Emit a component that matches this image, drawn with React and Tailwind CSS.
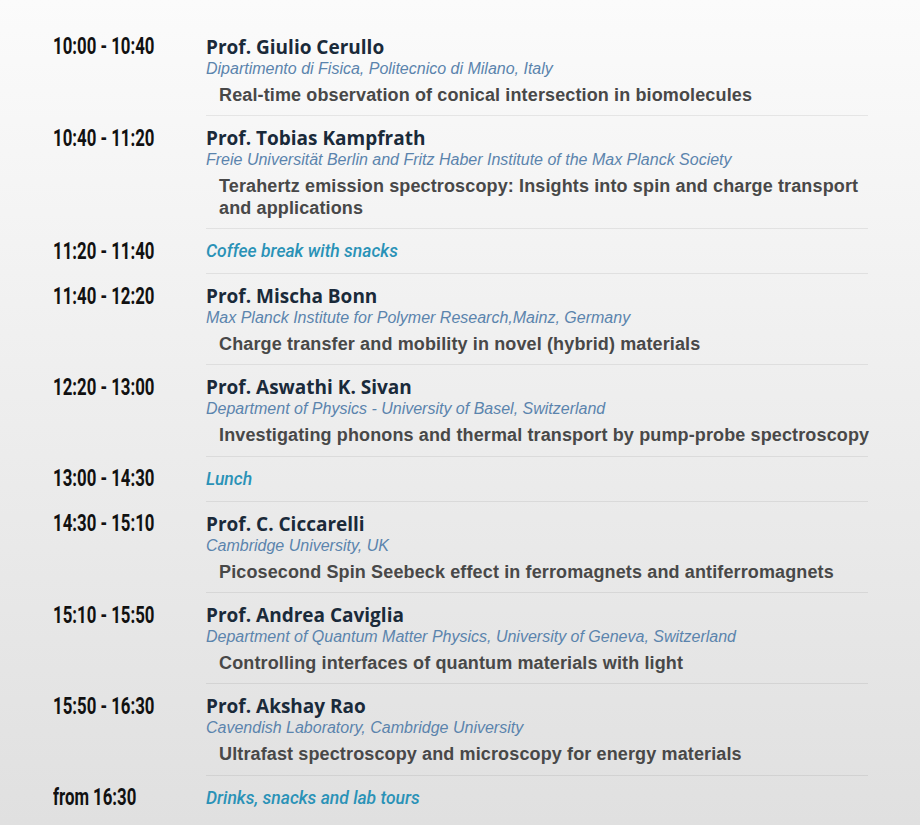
import React from "react";

const rows = [
  { t: "10:00 - 10:40", name: "Prof. Giulio Cerullo", aff: "Dipartimento di Fisica, Politecnico di Milano, Italy", title: "Real-time observation of conical intersection in biomolecules" },
  { t: "10:40 - 11:20", name: "Prof. Tobias Kampfrath", aff: "Freie Universität Berlin and Fritz Haber Institute of the Max Planck Society", title: "Terahertz emission spectroscopy: Insights into spin and charge transport and applications" },
  { t: "11:20 - 11:40", brk: "Coffee break with snacks" },
  { t: "11:40 - 12:20", name: "Prof. Mischa Bonn", aff: "Max Planck Institute for Polymer Research,Mainz, Germany", title: "Charge transfer and mobility in novel (hybrid) materials" },
  { t: "12:20 - 13:00", name: "Prof. Aswathi K. Sivan", aff: "Department of Physics - University of Basel, Switzerland", title: "Investigating phonons and thermal transport by pump-probe spectroscopy" },
  { t: "13:00 - 14:30", brk: "Lunch" },
  { t: "14:30 - 15:10", name: "Prof. C. Ciccarelli", aff: "Cambridge University, UK", title: "Picosecond Spin Seebeck effect in ferromagnets and antiferromagnets" },
  { t: "15:10 - 15:50", name: "Prof. Andrea Caviglia", aff: "Department of Quantum Matter Physics, University of Geneva, Switzerland", title: "Controlling interfaces of quantum materials with light" },
  { t: "15:50 - 16:30", name: "Prof. Akshay Rao", aff: "Cavendish Laboratory, Cambridge University", title: "Ultrafast spectroscopy and microscopy for energy materials" },
  { t: "from 16:30", brk: "Drinks, snacks and lab tours" },
];

export default function App() {
  return (
    <div className="w-[920px] h-[825px] bg-gradient-to-b from-[#fbfbfb] to-[#e0e0e0] pt-[24.5px] pl-[53px]">
      {rows.map((r, i) => (
        <div key={i} className="flex">
          <div className="w-[153px] shrink-0 pt-[12px]">
            <div className="h-[22px] flex items-center whitespace-nowrap origin-left scale-x-[0.73] font-['Roboto',sans-serif] font-bold text-[23px] text-[#111]">
              {r.t}
            </div>
          </div>
          <div className={`w-[662px] pt-[11px] ${i < rows.length - 1 ? "border-b border-black/[0.07]" : ""} ${r.brk ? "pb-[11px]" : "pb-[9.3px]"}`}>
            {r.brk ? (
              <div className="h-[22px] leading-[22px] font-['Roboto',sans-serif] italic font-medium text-[17.5px] text-[#2a92b7]">{r.brk}</div>
            ) : (
              <>
                <div className="leading-[22px] font-['Open_Sans',sans-serif] font-bold text-[19px] text-[#1a2a3a]">{r.name}</div>
                <div className="leading-[22px] font-['Liberation_Sans',sans-serif] italic text-[16px] text-[#5b84ad]">{r.aff}</div>
                <div className="mt-[4px] -mr-[20px] pl-[13px] leading-[22px] font-['Liberation_Sans',sans-serif] font-bold text-[18px] tracking-[0.13px] text-[#484848]">{r.title}</div>
              </>
            )}
          </div>
        </div>
      ))}
    </div>
  );
}
